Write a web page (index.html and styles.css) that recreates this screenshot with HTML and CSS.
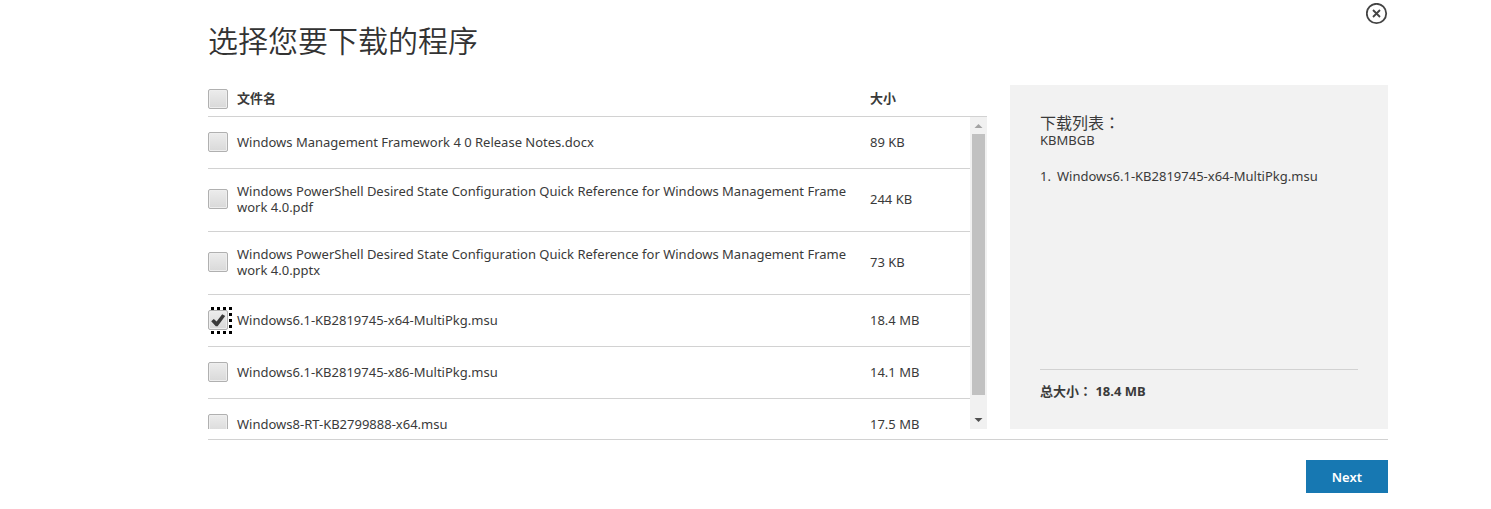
FILE: index.html
```html
<!DOCTYPE html>
<html lang="zh-CN">
<head>
<meta charset="utf-8">
<title>选择您要下载的程序</title>
<link rel="stylesheet" href="styles.css">
</head>
<body>
<main class="dialog">
  <button class="close" type="button" aria-label="关闭">
    <svg width="22" height="22" viewBox="0 0 22 22" fill="none" stroke="#444"><circle cx="10.5" cy="10.5" r="9.7" stroke-width="1.8"/><path d="M7 7l7 7M14 7l-7 7" stroke-width="1.8"/></svg>
  </button>
  <h1 class="title">选择您要下载的程序</h1>
  <div class="content">
    <section class="files">
      <table class="grid grid-head">
        <tr>
          <th class="col-check"><span class="check"><input type="checkbox" id="all" aria-label="全选"></span></th>
          <th class="col-name"><label for="all">文件名</label></th>
          <th class="col-size">大小</th>
        </tr>
      </table>
      <div class="viewport">
        <div class="scroller">
          <table class="grid grid-body">
            <tr>
              <td class="col-check"><span class="check"><input type="checkbox" id="f1"></span></td>
              <td class="col-name"><label for="f1">Windows Management Framework 4 0 Release Notes.docx</label></td>
              <td class="col-size">89 KB</td>
            </tr>
            <tr>
              <td class="col-check"><span class="check"><input type="checkbox" id="f2"></span></td>
              <td class="col-name"><label for="f2">Windows PowerShell Desired State Configuration Quick Reference for Windows Management Framework 4.0.pdf</label></td>
              <td class="col-size">244 KB</td>
            </tr>
            <tr>
              <td class="col-check"><span class="check"><input type="checkbox" id="f3"></span></td>
              <td class="col-name"><label for="f3">Windows PowerShell Desired State Configuration Quick Reference for Windows Management Framework 4.0.pptx</label></td>
              <td class="col-size">73 KB</td>
            </tr>
            <tr>
              <td class="col-check"><span class="check check-focus"><input type="checkbox" id="f4" checked><svg class="tick" width="20" height="20" viewBox="0 0 20 20"><path d="M3.2 11.2l2.6-2.3 2.8 2.5 5.6-7.2 3 1.9-7.6 10.2H7.8z" fill="#3a3a3a"/></svg></span></td>
              <td class="col-name"><label for="f4">Windows6.1-KB2819745-x64-MultiPkg.msu</label></td>
              <td class="col-size">18.4 MB</td>
            </tr>
            <tr>
              <td class="col-check"><span class="check"><input type="checkbox" id="f5"></span></td>
              <td class="col-name"><label for="f5">Windows6.1-KB2819745-x86-MultiPkg.msu</label></td>
              <td class="col-size">14.1 MB</td>
            </tr>
            <tr>
              <td class="col-check"><span class="check"><input type="checkbox" id="f6"></span></td>
              <td class="col-name"><label for="f6">Windows8-RT-KB2799888-x64.msu</label></td>
              <td class="col-size">17.5 MB</td>
            </tr>
          </table>
        </div>
        <div class="bar" aria-hidden="true">
          <svg class="arrow" width="17" height="17" viewBox="0 0 17 17"><path d="M4.5 11h8l-4-4z" fill="#a3a3a3"/></svg>
          <div class="track"><div class="thumb"></div></div>
          <svg class="arrow" width="17" height="17" viewBox="0 0 17 17"><path d="M4.5 6h8l-4 4z" fill="#505050"/></svg>
        </div>
      </div>
    </section>
    <aside class="summary">
      <h2 class="summary-title">下载列表<span class="colon" lang="zh-TW">：</span></h2>
      <p class="units">KBMBGB</p>
      <ol class="chosen">
        <li>Windows6.1-KB2819745-x64-MultiPkg.msu</li>
      </ol>
      <p class="total">总大小<span class="colon" lang="zh-TW">：</span> 18.4 MB</p>
    </aside>
  </div>
  <footer class="actions"><button class="next" type="button">Next</button></footer>
</main>
</body>
</html>
```
FILE: styles.css
```css
* { box-sizing: border-box; }

body {
  margin: 0;
  background: #fff;
  color: #3a3a3a;
  font: 13px/16px "Noto Sans", "Noto Sans CJK SC", sans-serif;
}

h1, h2, p, ol { margin: 0; padding: 0; font-weight: 400; }

.dialog {
  position: relative;
  margin: 0 103px 0 208px;
  padding-top: 19px;
}

.close {
  position: absolute;
  top: 3px;
  right: 0;
  padding: 0;
  border: 0;
  background: none;
}

.close svg { display: block; }

.title {
  color: #333;
  font-family: "Noto Sans CJK SC", sans-serif;
  font-size: 30px;
  font-weight: 350;
  line-height: 40px;
}

.content {
  display: flex;
  gap: 23px;
  margin-top: 26px;
  padding-bottom: 10px;
  border-bottom: 1px solid #d2d2d2;
}

.files { flex: 1; min-width: 0; }

.grid {
  width: 100%;
  border-collapse: separate;
  border-spacing: 0;
  table-layout: fixed;
}

.grid th, .grid td {
  padding: 0;
  border-bottom: 1px solid #d2d2d2;
  text-align: left;
  vertical-align: middle;
}

.grid .col-check { width: 29px; }
.grid-head th { height: 32px; padding-bottom: 6px; }
.grid-head th.col-check { padding-bottom: 4px; }
.grid-head .col-size { width: 117px; }
.grid-body td { height: 52px; padding: 14px 0 16px; }
.grid-body .col-size { width: 100px; }
.col-name label { display: block; padding-right: 16px; word-break: break-all; }

.check { display: block; position: relative; width: 20px; height: 20px; }

.check input {
  display: block;
  appearance: none;
  width: 20px;
  height: 20px;
  margin: 0;
  border: 1px solid #b0b0b0;
  border-radius: 2px;
  background: linear-gradient(#ececec, #d9d9d9);
  box-shadow: inset 0 0 0 1px #eee;
}

.tick { position: absolute; top: 0; left: 0; pointer-events: none; }

.check-focus::after {
  content: "";
  position: absolute;
  inset: -3px -4px -4px 0;
  pointer-events: none;
  background:
    repeating-linear-gradient(90deg, transparent 0 3px, #000 3px 6px) top / 100% 3px no-repeat,
    repeating-linear-gradient(90deg, transparent 0 3px, #000 3px 6px) bottom / 100% 3px no-repeat,
    repeating-linear-gradient(#000 0 3px, transparent 3px 6px) right / 3px 100% no-repeat;
}

.viewport { display: flex; height: 312px; }

.scroller {
  flex: 1;
  min-width: 0;
  overflow-y: auto;
  scrollbar-width: none;
}

.bar { display: flex; flex-direction: column; width: 17px; background: #f1f1f1; }
.arrow { display: block; }
.track { flex: 1; padding: 0 2px; }
.thumb { height: 94%; background: #c1c1c1; }

.summary {
  display: flex;
  flex-direction: column;
  width: 378px;
  padding: 29px 30px 30px;
  background: #f2f2f2;
}

.colon { font-family: "Noto Sans CJK TC", sans-serif; }
.summary-title { font-size: 16px; line-height: 17px; }
.summary-title .colon { line-height: 16px; }
.chosen { margin-top: 20px; padding-left: 17px; }
.chosen li { list-style: none; counter-increment: item; }
.chosen li::before {
  content: counter(item) ".";
  display: inline-block;
  width: 17px;
  margin-left: -17px;
}

.total {
  margin-top: auto;
  padding-top: 13px;
  border-top: 1px solid #d2d2d2;
  font-weight: 700;
}

.actions { display: flex; justify-content: flex-end; padding-top: 20px; }

.next {
  padding: 9px 26px 7px;
  border: 0;
  background: #1778b2;
  color: #fff;
  font: 600 13px/17px "Noto Sans", sans-serif;
}
```
